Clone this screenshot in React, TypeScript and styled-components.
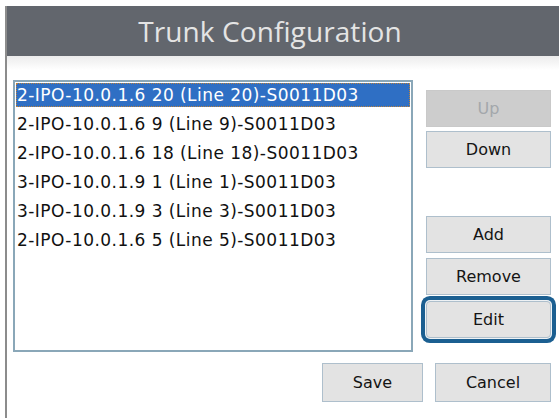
import React from "react";
import styled, { createGlobalStyle } from "styled-components";

const Global = createGlobalStyle`
  html, body { margin: 0; padding: 0; background: #ffffff; }
  body { width: 559px; height: 418px; overflow: hidden; }
`;

const Window = styled.div`
  margin: 6px 0 0 5px;
  height: 412px;
  border-left: 2px solid #8c8c8c;
  display: flex;
  flex-direction: column;
  background: #ffffff;
`;

const TitleBar = styled.div`
  height: 50px;
  flex: none;
  background: #62666d;
  display: flex;
  align-items: center;
  justify-content: center;
  padding-right: 26px;
  font-family: "Open Sans", "DejaVu Sans", sans-serif;
  font-size: 28px;
  color: #e4e4e4;
  letter-spacing: 0.1px;
`;

const Body = styled.div`
  flex: 1;
  background: linear-gradient(#ececec 0px, #ffffff 14px);
  padding: 24px 8px 0 6px;
  display: grid;
  grid-template-columns: 400px 125px;
  column-gap: 13px;
  grid-template-rows: 272px auto;
  row-gap: 11px;
`;

const List = styled.div`
  border: 2px solid #8aa7b8;
  background: #ffffff;
  padding: 1px;
  display: flex;
  flex-direction: column;
`;

const Row = styled.div<{ $selected?: boolean }>`
  height: 24px;
  margin-bottom: 5px;
  padding-left: 1px;
  box-sizing: border-box;
  display: flex;
  align-items: center;
  font-family: "DejaVu Sans", sans-serif;
  font-size: 17px;
  letter-spacing: 0.45px;
  white-space: nowrap;
  color: ${(p) => (p.$selected ? "#ffffff" : "#111111")};
  background: ${(p) => (p.$selected ? "#2f6fc4" : "transparent")};
  outline: ${(p) => (p.$selected ? "1px dotted #b9823f" : "none")};
  outline-offset: -1px;
`;

const Side = styled.div`
  display: flex;
  flex-direction: column;
  padding-top: 10px;
`;

const Button = styled.button<{ $focused?: boolean }>`
  height: 37px;
  width: 100%;
  box-sizing: border-box;
  border: 1px solid #aebfcc;
  background: #e3e3e3;
  font-family: "DejaVu Sans", sans-serif;
  font-size: 16px;
  color: #141414;
  padding: 0;
  border-radius: 0;
  &:disabled {
    background: #cdcdcd;
    color: #a3a7ab;
    border-color: #c9c9c9;
  }
  ${(p) =>
    p.$focused &&
    `
    box-shadow: 0 0 0 1px #eef2f5, 0 0 0 5px #1b5f91;
    border-radius: 4px;
  `}
`;

const Gap = styled.div<{ $h: number }>`
  height: ${(p) => p.$h}px;
  flex: none;
`;

const Footer = styled.div`
  grid-column: 1 / 3;
  display: flex;
  justify-content: flex-end;
  gap: 12px;
`;

const FooterButton = styled(Button)<{ $w: number }>`
  width: ${(p) => p.$w}px;
  height: 39px;
`;

const trunks = [
  "2-IPO-10.0.1.6 20 (Line 20)-S0011D03",
  "2-IPO-10.0.1.6 9 (Line 9)-S0011D03",
  "2-IPO-10.0.1.6 18 (Line 18)-S0011D03",
  "3-IPO-10.0.1.9 1 (Line 1)-S0011D03",
  "3-IPO-10.0.1.9 3 (Line 3)-S0011D03",
  "2-IPO-10.0.1.6 5 (Line 5)-S0011D03",
];

export default function App() {
  return (
    <>
      <Global />
      <Window>
        <TitleBar>Trunk Configuration</TitleBar>
        <Body>
          <List>
            {trunks.map((t, i) => (
              <Row key={t} $selected={i === 0}>
                {t}
              </Row>
            ))}
          </List>
          <Side>
            <Button disabled>Up</Button>
            <Gap $h={4} />
            <Button>Down</Button>
            <Gap $h={48} />
            <Button>Add</Button>
            <Gap $h={5} />
            <Button>Remove</Button>
            <Gap $h={6} />
            <Button $focused>Edit</Button>
          </Side>
          <Footer>
            <FooterButton $w={101}>Save</FooterButton>
            <FooterButton $w={116}>Cancel</FooterButton>
          </Footer>
        </Body>
      </Window>
    </>
  );
}
